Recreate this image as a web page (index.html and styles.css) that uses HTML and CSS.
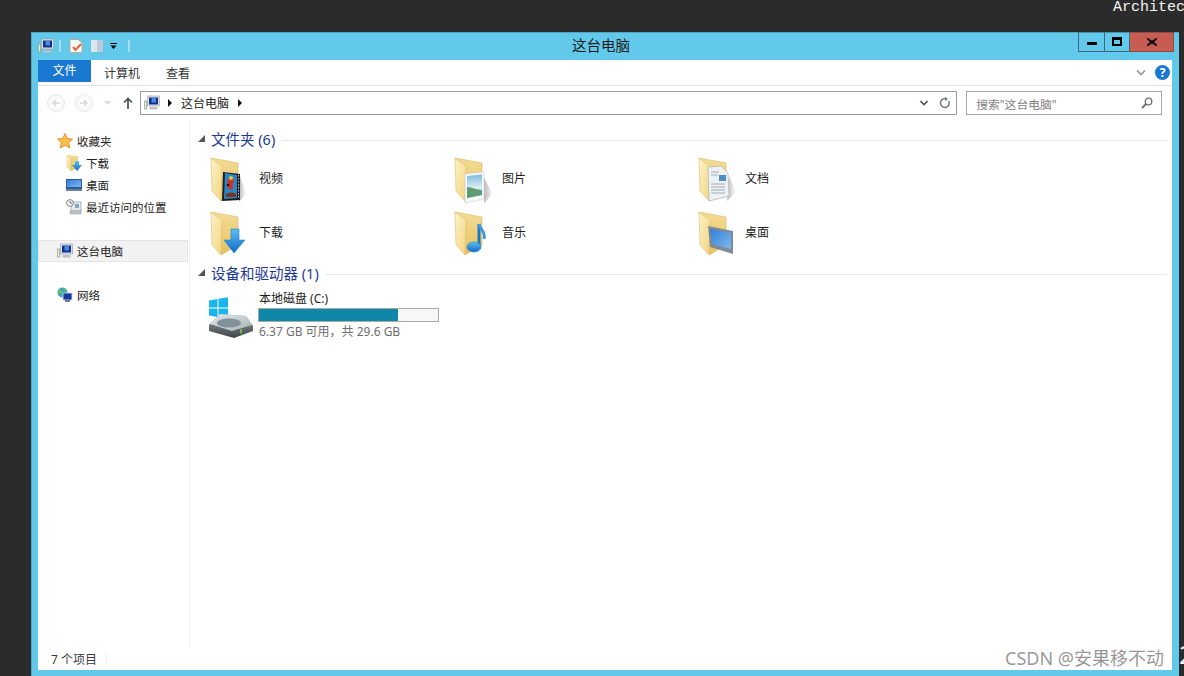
FILE: index.html
```html
<!DOCTYPE html>
<html lang="zh-CN">
<head>
<meta charset="utf-8">
<title>这台电脑</title>
<link rel="stylesheet" href="styles.css">
</head>
<body>
<svg class="defs" aria-hidden="true">
  <defs>
    <linearGradient id="gBack" x1="0" y1="0" x2="0" y2="1"><stop offset="0" stop-color="#f3dc94"/><stop offset="1" stop-color="#e6c263"/></linearGradient>
    <linearGradient id="gFront" x1="0" y1="0" x2="1" y2="1"><stop offset="0" stop-color="#fdf3c6"/><stop offset="1" stop-color="#f1d583"/></linearGradient>
    <linearGradient id="gBlue" x1="0" y1="0" x2="0" y2="1"><stop offset="0" stop-color="#5cc0f2"/><stop offset="1" stop-color="#1269c7"/></linearGradient>
    <linearGradient id="gScreen" x1="0" y1="0" x2="1" y2="1"><stop offset="0" stop-color="#2f7fd8"/><stop offset="1" stop-color="#7fb8ee"/></linearGradient>
    <linearGradient id="gPic" x1="0" y1="0" x2="0" y2="1"><stop offset="0" stop-color="#7fb9df"/><stop offset=".55" stop-color="#d8eef2"/><stop offset="1" stop-color="#9fc4a8"/></linearGradient>
    <linearGradient id="gDisk" x1="0" y1="0" x2="0" y2="1"><stop offset="0" stop-color="#9aa3a7"/><stop offset="1" stop-color="#3d4549"/></linearGradient>
    <linearGradient id="gTop" x1="0" y1="0" x2="1" y2="1"><stop offset="0" stop-color="#e3e8ea"/><stop offset="1" stop-color="#a9b3b6"/></linearGradient>
    <linearGradient id="gShade" x1="0" y1="0" x2="1" y2="0"><stop offset="0" stop-color="#000" stop-opacity=".28"/><stop offset="1" stop-color="#000" stop-opacity="0"/></linearGradient>
    <symbol id="folder" viewBox="0 0 48 52">
      <path d="M2 4 29 9V37L12 47Z" fill="url(#gBack)" stroke="#d8b765" stroke-width=".6"/>
      <path d="M2 4 13 12 12 47 3 37Z" fill="url(#gFront)" stroke="#dcbd6c" stroke-width=".6"/>
    </symbol>
    <symbol id="pc" viewBox="0 0 16 16">
      <rect x=".3" y="6" width="2.400" height="8" fill="#e6ebe4" stroke="#7f9a7f" stroke-width=".6"/>
      <rect x="3.500" y="1" width="12" height="10" fill="#dfe4e8" stroke="#8d99a3" stroke-width=".6"/>
      <rect x="5" y="2.500" width="9" height="7" fill="#10308f"/>
      <path d="M7.500 3h4.500v4.500H7.500z" fill="#4f86de"/>
      <rect x="5.500" y="12" width="8" height="2.500" fill="#b9c2c8"/>
    </symbol>
    <symbol id="minifolder" viewBox="0 0 16 16">
      <path d="M1 0 12 1V13L5 16Z" fill="url(#gBack)"/>
      <path d="M1 0 5 3V16L1 12Z" fill="url(#gFront)" stroke="#d9b963" stroke-width=".4"/>
      <path d="M9 6h4v4h3l-5 6-5-6h3z" fill="url(#gBlue)"/>
    </symbol>
  </defs>
</svg>

<div class="architect">Architect</div>

<main class="window">
  <header class="titlebar">
    <div class="qat">
      <svg class="ico16" viewBox="0 0 16 16"><use href="#pc"/></svg>
      <span class="qat-sep"></span>
      <svg class="ico14 qat-doc" viewBox="0 0 14 14"><path d="M1 .5H9L13 4V13.500H1Z" fill="#fbfbf6" stroke="#b5aaa0"/><path d="M4 8l2.500 3L12 5" fill="none" stroke="#e2663a" stroke-width="2"/></svg>
      <svg class="ico14 qat-fold" viewBox="0 0 14 14"><path d="M1 1H7V13H1Z" fill="#dfe7ee"/><path d="M7 1h6V13H7Z" fill="#b9cbdb"/></svg>
      <svg class="ico-drop" viewBox="0 0 7 6"><path d="M0 0H7V1H0ZM.5 2.500h6L3.500 6Z" fill="#000"/></svg>
      <span class="qat-sep qat-sep-end"></span>
    </div>
    <h1 class="title">这台电脑</h1>
    <div class="winbtns">
      <span class="wb wb-min"><svg viewBox="0 0 10 4"><rect width="10" height="3" fill="#000"/></svg></span>
      <span class="wb wb-max"><svg viewBox="0 0 10 9"><path fill-rule="evenodd" d="M0 0H10V9H0ZM2 3V7H8V3Z" fill="#000"/></svg></span>
      <span class="wb wb-close"><svg viewBox="0 0 10 8"><path d="M.5 0 5 3 9.500 0 10 1 6.500 4 10 7 9.500 8 5 5 .5 8 0 7 3.500 4 0 1Z" fill="#000" stroke="#000" stroke-width=".5"/></svg></span>
    </div>
  </header>

  <div class="client">
    <nav class="ribbon">
      <span class="tab tab-file">文件</span>
      <span class="tab tab-pc">计算机</span>
      <span class="tab tab-view">查看</span>
      <span class="ribbon-space"></span>
      <svg class="rib-chev" viewBox="0 0 10 6"><path d="M1 .5 5 4.500 9 .5" fill="none" stroke="#8f9aa3" stroke-width="1.600"/></svg>
      <span class="help">?</span>
    </nav>

    <div class="navbar">
      <svg class="navcirc" viewBox="0 0 18 18"><circle cx="9" cy="9" r="8.400" fill="#fff" stroke="#dfe3e6"/><circle cx="9" cy="9" r="6.200" fill="none" stroke="#eef0f2"/><path d="M13 9H6M9 6 6 9l3 3" fill="none" stroke="#d3d8dc" stroke-width="1.500"/></svg>
      <svg class="navcirc navcirc2" viewBox="0 0 18 18"><circle cx="9" cy="9" r="8.400" fill="#fff" stroke="#dfe3e6"/><circle cx="9" cy="9" r="6.200" fill="none" stroke="#eef0f2"/><path d="M5 9h7M9 6l3 3-3 3" fill="none" stroke="#d3d8dc" stroke-width="1.500"/></svg>
      <svg class="navdrop" viewBox="0 0 7 4"><path d="M0 0H7L3.500 4Z" fill="#d8dcdf"/></svg>
      <svg class="navup" viewBox="0 0 10 12"><path d="M5 12V2M1 5.500 5 1.500 9 5.500" fill="none" stroke="#4a5157" stroke-width="1.700"/></svg>
      <div class="address">
        <svg class="ico16" viewBox="0 0 16 16"><use href="#pc"/></svg>
        <span class="crumb-arrow"></span>
        <span class="crumb">这台电脑</span>
        <span class="crumb-arrow"></span>
        <span class="addr-space"></span>
        <svg class="addr-chev" viewBox="0 0 8 6"><path d="M.5 1 4 4.500 7.500 1" fill="none" stroke="#4d5358" stroke-width="1.600"/></svg>
        <svg class="addr-refresh" viewBox="0 0 12 12"><path d="M9.800 4A4.400 4.400 0 1 1 6 1.600" fill="none" stroke="#6f777d" stroke-width="1.500"/><path d="M6 0V4L9 2Z" fill="#6f777d"/></svg>
      </div>
      <div class="search">
        <span class="search-text">搜索"这台电脑"</span>
        <svg class="search-ico" viewBox="0 0 12 12"><circle cx="7.500" cy="4.500" r="3.300" fill="none" stroke="#6a7075" stroke-width="1.300"/><path d="M5 7 1 11" stroke="#6a7075" stroke-width="1.800"/></svg>
      </div>
    </div>

    <div class="body">
      <aside class="sidebar">
        <div class="side-item">
          <svg class="ico16" viewBox="0 0 16 16"><path d="M8 .5 10.300 5.500 15.500 6.100 11.700 9.700 12.800 15 8 12.300 3.200 15 4.300 9.700.5 6.100 5.700 5.500Z" fill="#f9bf4a" stroke="#e58a2e" stroke-width=".9"/></svg>
          <span>收藏夹</span>
        </div>
        <div class="side-item side-sub">
          <svg class="ico16" viewBox="0 0 16 16"><use href="#minifolder"/></svg>
          <span>下载</span>
        </div>
        <div class="side-item side-sub">
          <svg class="ico16" viewBox="0 0 16 16"><rect x="0" y="2" width="16" height="10" fill="#2d5b9c"/><rect x="1" y="3" width="14" height="7" fill="url(#gScreen)"/><rect x="0" y="12" width="16" height="2" fill="#6b7f93"/></svg>
          <span>桌面</span>
        </div>
        <div class="side-item side-sub">
          <svg class="ico16" viewBox="0 0 16 16"><rect x="5" y="3" width="10" height="9" fill="#e3e9ec" stroke="#8e979c" stroke-width=".7"/><rect x="9" y="5" width="4" height="4" fill="#7fa7c6"/><rect x="4" y="12" width="11" height="3" fill="#bcc4c8" stroke="#8e979c" stroke-width=".5"/><circle cx="4" cy="4" r="3.400" fill="#f4f6f6" stroke="#7d868b"/><path d="M4 2V4H6" fill="none" stroke="#555" stroke-width=".8"/></svg>
          <span>最近访问的位置</span>
        </div>
        <div class="side-item side-selected">
          <svg class="ico16" viewBox="0 0 16 16"><use href="#pc"/></svg>
          <span>这台电脑</span>
        </div>
        <div class="side-item side-net">
          <svg class="ico16" viewBox="0 0 16 16"><circle cx="5.500" cy="5.500" r="5" fill="#3c9fcf"/><path d="M1.500 3c2-1 3.500 0 3.500 2S3 8.500 1.500 6.500ZM6 1c2 0 3.500 1 3.500 2L7 4Z" fill="#5fc24a"/><rect x="6" y="6" width="9" height="7" fill="#163a9e" stroke="#cfd8e0" stroke-width=".9"/><rect x="8" y="13" width="5" height="2" fill="#6f7d88"/></svg>
          <span>网络</span>
        </div>
      </aside>

      <section class="content">
        <h2 class="group-head"><span class="tri"></span><span class="group-name">文件夹 (6)</span><span class="group-line"></span></h2>
        <div class="folders">
          <div class="folder-item">
            <svg class="folder-ico" viewBox="0 0 48 52">
              <use href="#folder" width="48" height="52"/>
              <path d="M31 22 37 40 30 48Z" fill="url(#gShade)"/>
              <path d="M14 18 31 20V46L13 47Z" fill="#1d1d1d"/>
              <path d="M16 19 28 21V44L15 45Z" fill="#2a86c8"/>
              <path d="M18 26c3-3 7-2 7 1s-2 3-1 6-3 4-5 1 1-3-1-8Z" fill="#c6352b"/>
              <circle cx="22" cy="24" r="2" fill="#f0c23a"/>
              <circle cx="19" cy="31" r="1.300" fill="#111"/>
              <path d="M17 40c3-2 8-2 10 0v3H17Z" fill="#7a3320"/>
              <path d="M29.500 21v24" stroke="#c9c9c9" stroke-width="1" stroke-dasharray="1.500 1.500"/>
            </svg>
            <span>视频</span>
          </div>
          <div class="folder-item">
            <svg class="folder-ico" viewBox="0 0 48 52">
              <use href="#folder" width="48" height="52"/>
              <path d="M31 24 40 40 31 49Z" fill="url(#gShade)"/>
              <path d="M12 20 31 18V45L12 49Z" fill="#f7f9f9" stroke="#c9ced1" stroke-width=".6"/>
              <path d="M14 22 29 20.500V41L14 44Z" fill="url(#gPic)"/>
              <path d="M14 33c5 0 9 3 15 3v5L14 44Z" fill="#5f9a74"/>
            </svg>
            <span>图片</span>
          </div>
          <div class="folder-item">
            <svg class="folder-ico" viewBox="0 0 48 52">
              <use href="#folder" width="48" height="52"/>
              <path d="M32 22 39 38 30 47Z" fill="url(#gShade)"/>
              <path d="M11 13 24 12 31 19 32 42 12 47Z" fill="#eef1f4" stroke="#a9b0b6" stroke-width=".7"/>
              <path d="M14 18H22M14 21H21M14 30H28M14 33H28M14 36H28M14 39H28" stroke="#a5adb4" stroke-width="1"/>
              <rect x="22" y="21" width="7" height="6" fill="#4f8fbf"/>
            </svg>
            <span>文档</span>
          </div>
          <div class="folder-item">
            <svg class="folder-ico" viewBox="0 0 48 52">
              <use href="#folder" width="48" height="52"/>
              <path d="M22 21H30V32H36L25 45 15 32H22Z" fill="url(#gBlue)" stroke="#1f7fce" stroke-width=".6"/>
            </svg>
            <span>下载</span>
          </div>
          <div class="folder-item">
            <svg class="folder-ico" viewBox="0 0 48 52">
              <use href="#folder" width="48" height="52"/>
              <path d="M26 16V38" stroke="#1f78c6" stroke-width="3"/>
              <path d="M26 16c1 6 7 7 5 15" fill="none" stroke="#3f9ae0" stroke-width="3"/>
              <ellipse cx="21" cy="39" rx="7" ry="5" fill="url(#gBlue)" stroke="#1f78c6" stroke-width=".6"/>
            </svg>
            <span>音乐</span>
          </div>
          <div class="folder-item">
            <svg class="folder-ico" viewBox="0 0 48 52">
              <use href="#folder" width="48" height="52"/>
              <path d="M11 18 36 23V46L13 39Z" fill="#7f8a93"/>
              <path d="M13 21 34 25V41L15 36Z" fill="url(#gScreen)"/>
            </svg>
            <span>桌面</span>
          </div>
        </div>

        <h2 class="group-head group-head2"><span class="tri"></span><span class="group-name">设备和驱动器 (1)</span><span class="group-line"></span></h2>
        <div class="drive">
          <svg class="drive-ico" viewBox="0 0 46 48">
            <path d="M1 8.500 9.500 7V15.500H1ZM10.500 6.800 20 5.200V15.500H10.500ZM1 16.500H9.500V25L1 23.500ZM10.500 16.500H20V27L10.500 25.300Z" fill="#19b5ee"/>
            <path d="M12 22 38 24 45 34V39L26 46 1 39V33Z" fill="url(#gDisk)"/>
            <path d="M12 22 38 24 44 33 24 39 2 32Z" fill="url(#gTop)"/>
            <ellipse cx="21" cy="31" rx="12" ry="4.500" fill="#7f9199"/>
            <path d="M33 41.500V37" stroke="#7fd34a" stroke-width="1.500"/>
          </svg>
          <div class="drive-info">
            <div class="drive-name">本地磁盘 (C:)</div>
            <div class="meter"><div class="meter-fill"></div></div>
            <div class="drive-sub">6.37 GB 可用，共 29.6 GB</div>
          </div>
        </div>
      </section>
    </div>

    <footer class="status"><span>7 个项目</span><span class="status-sep"></span></footer>
  </div>
</main>

<div class="watermark">CSDN @安果移不动</div>
<div class="edge-glyph">2</div>
</body>
</html>
```
FILE: styles.css
```css
* { box-sizing: border-box; }
html, body { margin: 0; height: 676px; overflow: hidden; }
body {
  background: #2b2b2b;
  font-family: "Noto Sans", "Noto Sans CJK SC", sans-serif;
  font-size: 12px;
  color: #1c1c1c;
  padding: 32px 0 0 31px;
}
.defs { display: block; width: 0; height: 0; }
svg { display: block; flex: none; }
.ico16 { width: 16px; height: 16px; }
.ico14 { width: 14px; height: 14px; }

.architect {
  position: absolute;
  top: -1px;
  left: 1113px;
  font: 15px/18px "Liberation Mono", monospace;
  color: #f4f4f4;
}

.window {
  width: 1148px;
  height: 644px;
  background: #63c9ea;
  padding: 0 7px 6px;
  display: flex;
  flex-direction: column;
  box-shadow: inset 1px 1px 0 #4fa5c2;
}

/* title bar */
.titlebar { height: 28px; flex: none; display: flex; align-items: flex-start; }
.qat { width: 86px; height: 28px; display: flex; align-items: center; flex: none; overflow: visible; }
.qat-sep { width: 2px; height: 12px; margin-left: 5px; background: #a9dcee; flex: none; }
.qat-doc { margin-left: 8px; }
.qat-fold { margin-left: 7px; }
.ico-drop { width: 7px; height: 6px; margin-left: 6px; }
.qat-sep-end { margin-left: 11px; }
.title {
  flex: 1;
  margin: 0;
  font-size: 14.5px;
  font-weight: 400;
  line-height: 27px;
  text-align: center;
  color: #1a1a1a;
}
.winbtns { display: flex; margin-right: -2px; height: 20px; flex: none; }
.wb { display: flex; align-items: center; justify-content: center; height: 20px; border: 1px solid #3b6a7e; border-top-color: #4a8ea8; }
.wb-min { width: 27px; }
.wb-min svg { width: 10px; height: 4px; margin-top: 3px; }
.wb-max { width: 25px; border-left: 0; }
.wb-max svg { width: 10px; height: 9px; margin-top: -2px; }
.wb-close { width: 44px; background: #c75d52; border-color: #8f4a44; border-left: 0; }
.wb-close svg { width: 10px; height: 8px; }

/* client */
.client { flex: 1; background: #fff; display: flex; flex-direction: column; min-height: 0; }
.ribbon {
  height: 26px;
  flex: none;
  display: flex;
  align-items: flex-start;
  border-bottom: 1px solid #e2e2e2;
  padding-right: 2px;
}
.tab { height: 22px; line-height: 27px; color: #333; }
.tab-file { width: 53px; line-height: 22px; background: #1a78d0; color: #fff; text-align: center; }
.tab-pc { margin-left: 13px; }
.tab-view { margin-left: 26px; }
.ribbon-space { flex: 1; }
.rib-chev { width: 10px; height: 6px; margin: 10px 9px 0 0; }
.help {
  width: 15px;
  height: 15px;
  margin-top: 5px;
  border-radius: 50%;
  background: #1a78d0;
  color: #fff;
  font-weight: 700;
  font-size: 12px;
  line-height: 15px;
  text-align: center;
}

/* navigation */
.navbar { height: 34px; flex: none; display: flex; align-items: center; padding: 0 10px 0 9px; }
.navcirc { width: 18px; height: 18px; }
.navcirc2 { margin-left: 10px; }
.navdrop { width: 7px; height: 4px; margin-left: 11px; }
.navup { width: 10px; height: 12px; margin-left: 12px; }
.address {
  width: 818px;
  height: 24px;
  margin-left: 7px;
  border: 1px solid #9b9b9b;
  display: flex;
  align-items: center;
  padding: 0 6px 0 3px;
}
.crumb-arrow { width: 0; height: 0; border-left: 4px solid #111; border-top: 4px solid transparent; border-bottom: 4px solid transparent; margin-left: 8px; }
.crumb { margin-left: 9px; color: #222; }
.crumb + .crumb-arrow { margin-left: 9px; }
.addr-space { flex: 1; }
.addr-chev { width: 8px; height: 6px; margin-right: -1px; }
.addr-refresh { width: 12px; height: 12px; margin-left: 12px; margin-right: -1px; }
.search {
  width: 196px;
  height: 24px;
  margin-left: 9px;
  border: 1px solid #a6a6a6;
  display: flex;
  align-items: center;
  justify-content: space-between;
  padding: 0 8px 0 9px;
}
.search-text { color: #828282; font-size: 11.8px; }
.search-ico { width: 12px; height: 12px; }

/* body */
.body { flex: 1; display: flex; min-height: 0; }
.sidebar { width: 152px; flex: none; border-right: 1px solid #f0f0f0; padding-top: 10px; font-size: 11.5px; }
.side-item { height: 22px; display: flex; align-items: center; gap: 4px; padding-left: 19px; color: #222; }
.side-sub { padding-left: 28px; }
.side-selected {
  width: 150px;
  margin-top: 22px;
  background: #f2f2f2;
  border: 1px solid #e4e4e4;
  padding-left: 18px;
}
.side-net { margin-top: 22px; }

.content { flex: 1; padding: 8px 5px 0 8px; min-width: 0; }
.group-head { display: flex; align-items: center; height: 20px; margin: 0; font-size: 14.5px; font-weight: 400; color: #1f3a93; }
.group-head2 { margin-top: 1px; }
.tri { width: 0; height: 0; border-left: 7px solid transparent; border-bottom: 7px solid #555; margin-right: 6px; }
.group-name { white-space: nowrap; }
.group-line { flex: 1; height: 1px; margin: 4px 0 0 7px; background: #e1e9f2; }
.folders { display: grid; grid-template-columns: repeat(3, 244px); grid-auto-rows: 54px; margin: 5px 0 0 11px; }
.folder-item { display: flex; align-items: center; gap: 2px; line-height: 16px; }
.folder-item span { margin-top: -3px; }
.folder-item:nth-child(3n+2) { gap: 1px; }
.folder-item:nth-child(3n) { gap: 0; }
.folder-ico { width: 48px; height: 52px; }
.drive { display: flex; margin: 7px 0 0 10px; }
.drive-ico { width: 46px; height: 48px; margin: 3px 4px 0 0; }
.drive-info { width: 181px; }
.drive-name { height: 19px; line-height: 20px; padding-left: 1px; }
.meter { height: 14px; border: 1px solid #a9a9a9; background: #f7f7f7; }
.meter-fill { width: 77.5%; height: 100%; background: #0f87a8; }
.drive-sub { line-height: 20px; padding-left: 1px; color: #6d6d6d; }

.status { height: 22px; flex: none; display: flex; align-items: center; padding-left: 13px; color: #3c3c3c; }
.status-sep { width: 1px; height: 12px; margin-left: 9px; background: #eeeeee; }

/* overlays */
.watermark {
  position: absolute;
  left: 1005px;
  top: 646px;
  font-size: 18px;
  line-height: 25px;
  color: rgba(110, 110, 110, .72);
  white-space: nowrap;
}
.edge-glyph {
  position: absolute;
  left: 1179px;
  top: 638px;
  width: 5px;
  overflow: hidden;
  font-size: 26px;
  line-height: 32px;
  color: #f0f0f0;
}
```
